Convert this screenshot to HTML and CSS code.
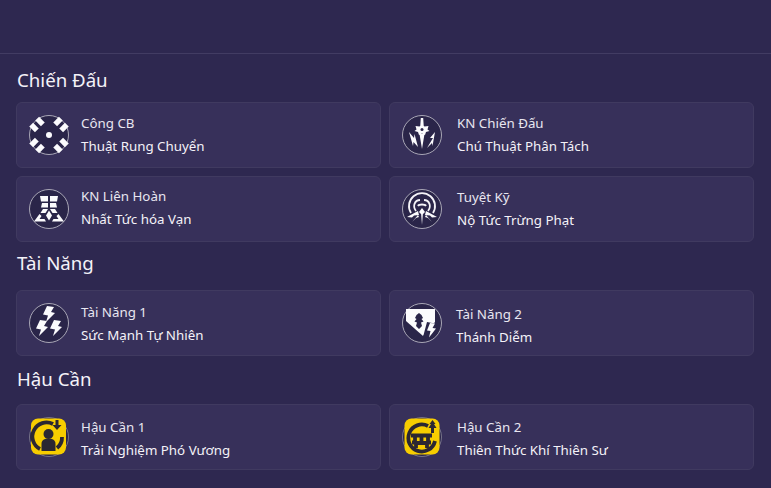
FILE: index.html
```html
<!DOCTYPE html>
<html lang="vi">
<head>
<meta charset="utf-8">
<title>Kỹ năng</title>
<link rel="stylesheet" href="styles.css">
</head>
<body>
<header class="topbar"></header>
<main class="content">
  <section class="group">
    <h2 class="group-title">Chiến Đấu</h2>
    <div class="grid">
      <div class="card">
        <svg class="icon" viewBox="0 0 40 40"><circle class="disc" cx="20" cy="20" r="19.5"/>
          <g class="w">
            <circle cx="20" cy="20" r="3"/>
            <rect x="-4" y="-2.700" width="8" height="5.400" transform="translate(11 6.500) rotate(45)"/>
            <rect x="-4" y="-2.700" width="8" height="5.400" transform="translate(5 12.500) rotate(45)"/>
            <rect x="-4" y="-2.700" width="8" height="5.400" transform="translate(29 6.500) rotate(-45)"/>
            <rect x="-4" y="-2.700" width="8" height="5.400" transform="translate(35 12.500) rotate(-45)"/>
            <rect x="-4" y="-2.700" width="8" height="5.400" transform="translate(11 33.500) rotate(-45)"/>
            <rect x="-4" y="-2.700" width="8" height="5.400" transform="translate(5 27.500) rotate(-45)"/>
            <rect x="-4" y="-2.700" width="8" height="5.400" transform="translate(29 33.500) rotate(45)"/>
            <rect x="-4" y="-2.700" width="8" height="5.400" transform="translate(35 27.500) rotate(45)"/>
          </g></svg>
        <div class="text"><p class="label">Công CB</p><p class="name">Thuật Rung Chuyển</p></div>
      </div>
      <div class="card wide">
        <svg class="icon" viewBox="0 0 40 40"><circle class="disc" cx="20" cy="20" r="19.5"/>
          <path class="w" d="M18.800 3h2.400l.6 9h-3.600zM20 9l2.500 2.500 4-.5-1 3.500 2 1.500-3.500 1-1 3-3-1.500-3 1.500-1-3-3.500-1 2-1.500-1-3.500 4 .5zM17.500 19h5L20 34zM7 17l5 6 .5-4 3.500 13-4.500-5-.5 4zM33 17l-5 6h3l-6 10 5-5 .5 3z"/>
          <circle class="d" cx="20" cy="14.500" r="1.500"/></svg>
        <div class="text"><p class="label">KN Chiến Đấu</p><p class="name">Chú Thuật Phân Tách</p></div>
      </div>
      <div class="card">
        <svg class="icon" viewBox="0 0 40 40"><circle class="disc" cx="20" cy="20" r="19.500"/>
          <path class="w" d="M11 7h8v5.500h-7zM21 7h8l-1 5.500h-7zM13 14h6v4.500h-7zM21 14h6l1 4.500h-7zM14 20h5l-2.500 4h-5zM21 20h5l2.500 4h-5zM20 21.500l3 5-3 5-3-5zM10.500 25l2 2-2 3h5l1.500 2.500H5zM29.500 25l-2 2 2 3h-5L23 32.500h12z"/></svg>
        <div class="text up-2"><p class="label">KN Liên Hoàn</p><p class="name">Nhất Tức hóa Vạn</p></div>
      </div>
      <div class="card wide">
        <svg class="icon" viewBox="0 0 40 40"><circle class="disc" cx="20" cy="20" r="19.500"/>
          <g class="ws"><path d="M9 24A13 13 0 1 1 31 24"/><path d="M14 22c-4-5-1-11 4-11M26 22c4-5 1-11-4-11"/><path d="M16 17c1-2 7-2 8 0"/></g>
          <path class="w" d="M18.800 21h2.400L20 36zM17 23l3-4 3 4-3 3zM5 28l11-6 1 4-5 .5-2 2zM35 28l-11-6-1 4 5 .5 2 2zM10 33l6-7 1 2-3 1zM30 33l-6-7-1 2 3 1z"/></svg>
        <div class="text up-1"><p class="label">Tuyệt Kỹ</p><p class="name">Nộ Tức Trừng Phạt</p></div>
      </div>
    </div>
  </section>
  <section class="group talent">
    <h2 class="group-title">Tài Năng</h2>
    <div class="grid">
      <div class="card">
        <svg class="icon soft" viewBox="0 0 40 40"><circle class="disc" cx="20" cy="20" r="19.500"/>
          <path class="w" d="M18 3l7 1-3 5 4 1-9 9 2-6.500-5-1zM11 17l7 1-3 5 4 1-9 9 2-6.500-5-1zM25 17l7 1-3 5 4 1-9 9 2-6.500-5-1z"/></svg>
        <div class="text down-1"><p class="label">Tài Năng 1</p><p class="name">Sức Mạnh Tự Nhiên</p></div>
      </div>
      <div class="card wide">
        <svg class="icon soft" viewBox="0 0 40 40"><circle class="disc" cx="20" cy="20" r="19.500"/>
          <path class="w" d="M4 6h29v13L21 33 4 18z"/>
          <path class="d" d="M17 10l2.500 2 1.500 3-1.500 1 2 2.500-2.500 1 1 3.500-3 3-3-3 1-3.500-2.500-1 2-2.500-1.500-1 1.500-3zM25 19l10 2-3 14-11-1z"/>
          <path class="w" d="M28 20l5 .5-2.500 4.500 3.500.5-7 9 1.500-6.500-3.500-.5z"/></svg>
        <div class="text shift-2"><p class="label">Tài Năng 2</p><p class="name">Thánh Diễm</p></div>
      </div>
    </div>
  </section>
  <section class="group logistics">
    <h2 class="group-title">Hậu Cần</h2>
    <div class="grid">
      <div class="card">
        <svg class="icon soft" viewBox="0 0 40 40"><circle class="ring" cx="20" cy="20" r="19.500"/>
          <rect class="y" x="2" y="1.500" width="35" height="36" rx="7"/>
          <g class="ks"><path d="M24 7A13.500 13.500 0 0 0 11 32M33 20a13.500 13.500 0 0 1-5 11"/></g>
          <path class="k" d="M26.500 3h3v5h3l-4.500 5-4.500-5h3z"/>
          <circle class="k" cx="19.500" cy="17" r="5"/><path class="k" d="M12.500 34v-7c0-4 3-5.500 7-5.500s7 1.500 7 5.500v7z"/></svg>
        <div class="text down-3"><p class="label">Hậu Cần 1</p><p class="name">Trải Nghiệm Phó Vương</p></div>
      </div>
      <div class="card wide">
        <svg class="icon soft" viewBox="0 0 40 40"><circle class="ring" cx="20" cy="20" r="19.500"/>
          <rect class="y" x="2.500" y="1.500" width="35" height="36" rx="7"/>
          <g class="ks"><path d="M26 9A13.500 13.500 0 1 0 33 24"/><path d="M9 18.500h21M19.500 18.500v7M13 18.500v7h-3M26 18.500v7h3M14 31v-5h11v5"/></g>
          <path class="k" d="M30.500 3l3 4h-1.500l2.500 4H32v5h-3v-5h-2.500L29 7h-1.500z"/></svg>
        <div class="text down-3"><p class="label">Hậu Cần 2</p><p class="name">Thiên Thức Khí Thiên Sư</p></div>
      </div>
    </div>
  </section>
</main>
</body>
</html>
```
FILE: styles.css
```css
* {
  box-sizing: border-box;
}

html,
body {
  margin: 0;
  height: 100%;
}

body {
  overflow: hidden;
  background: #2e2850;
  color: #f4f2f8;
  font-family: "Noto Sans", "Open Sans", sans-serif;
}

.topbar {
  height: 54px;
  border-bottom: 1px solid #423c63;
}

.content {
  padding: 13px 17px 0 16px;
}

.group-title {
  margin: 0 0 10px 1px;
  font-size: 18.67px;
  font-weight: 400;
  line-height: 25px;
}

.talent {
  margin-top: 8px;
}

.talent .group-title {
  margin-bottom: 15px;
}

.logistics {
  margin-top: 10px;
}

.logistics .group-title {
  margin-bottom: 13px;
}

.grid {
  display: grid;
  grid-template-columns: 365px 365px;
  gap: 8px;
}

.card {
  display: flex;
  align-items: center;
  gap: 12px;
  height: 66px;
  padding: 0 12px;
  background: #37305a;
  border: 1px solid #403a60;
  border-radius: 6px;
}

.wide {
  gap: 15px;
}

.icon {
  flex: none;
  width: 40px;
  height: 40px;
  filter: blur(0.4px);
}

.icon.soft {
  filter: blur(0.7px);
}

.disc {
  fill: #2a2549;
  stroke: #a9a7b6;
  stroke-width: 1;
}

.ring {
  fill: #2a2549;
  stroke: #77748a;
  stroke-width: 1;
}

.w {
  fill: #fbfbfd;
}

.ws {
  fill: none;
  stroke: #f4f3f8;
  stroke-width: 1.800;
}

.d {
  fill: #2a2549;
}

.y {
  fill: #f7cd00;
}

.k {
  fill: #2b2732;
}

.ks {
  fill: none;
  stroke: #2b2732;
  stroke-width: 3.800;
}

.text {
  min-width: 0;
}

.label,
.name {
  margin: 0;
  font-size: 13.33px;
  line-height: 23px;
  white-space: nowrap;
}

.label {
  color: #e8e6f0;
}

.up-1 {
  margin-top: -1px;
}

.up-2 {
  margin-top: -3px;
}

.down-1 {
  margin-top: 1px;
}

.down-3 {
  margin-top: 3px;
}

.shift-2 {
  margin-top: 5px;
  margin-left: -1px;
}
```
